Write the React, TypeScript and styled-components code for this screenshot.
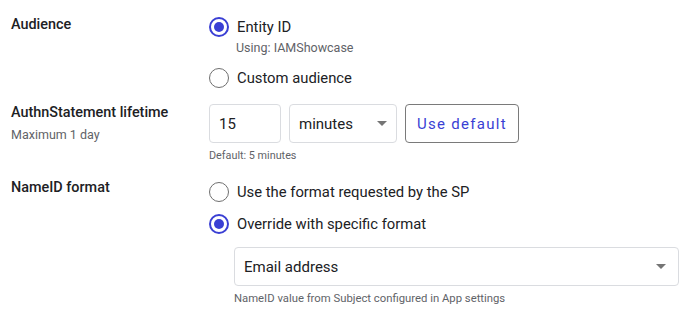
import React, {FC} from 'react';
import styled, {createGlobalStyle} from "styled-components";

const blue = "#3a3fd4"

const GlobalStyle = createGlobalStyle`
    body {
        margin: 0;
        background: #ffffff;
        font-family: Roboto, "Noto Sans", Arial, sans-serif;
        color: #202124;
    }
`

interface IRadio {
    checked?: boolean,
    label: string,
}

const Radio: FC<IRadio> = ({checked, label}) => (
    <RadioRow>
        <RadioCircle $checked={checked}/>
        <RadioText>{label}</RadioText>
    </RadioRow>
)

const Caret = () => (
    <svg width="10" height="5" viewBox="0 0 10 5">
        <path d="M0 0 L10 0 L5 5 Z" fill="#757575"/>
    </svg>
)

const App: FC = () => {
    return (
        <Page>
            <GlobalStyle/>

            <Section $gapAfter={7}>
                <LabelCol $top={2}>
                    <Title>Audience</Title>
                </LabelCol>
                <Controls>
                    <Radio checked label="Entity ID"/>
                    <Hint $size={12.5} $top={-5} $bottom={10} $indent>Using: IAMShowcase</Hint>
                    <Radio label="Custom audience"/>
                </Controls>
            </Section>

            <Section $gapAfter={14}>
                <LabelCol $top={0}>
                    <Title>AuthnStatement lifetime</Title>
                    <SubTitle>Maximum 1 day</SubTitle>
                </LabelCol>
                <Controls>
                    <FieldRow>
                        <Box $width={72}>15</Box>
                        <Box $width={108}>
                            minutes
                            <Caret/>
                        </Box>
                        <OutlineButton>Use default</OutlineButton>
                    </FieldRow>
                    <Hint $size={10.8} $top={6} $bottom={0}>Default: 5 minutes</Hint>
                </Controls>
            </Section>

            <Section $gapAfter={0}>
                <LabelCol $top={2}>
                    <Title>NameID format</Title>
                </LabelCol>
                <Controls $top={2}>
                    <Radio label="Use the format requested by the SP"/>
                    <Radio checked label="Override with specific format"/>
                    <Nested>
                        <Box>
                            Email address
                            <Caret/>
                        </Box>
                        <Hint $size={11.3} $top={6} $bottom={0}>
                            NameID value from Subject configured in App settings
                        </Hint>
                    </Nested>
                </Controls>
            </Section>
        </Page>
    );
};

export default App;

const Page = styled.div`
    width: 693px;
    height: 316px;
    box-sizing: border-box;
    padding: 14px 14px 0 11px;
    overflow: hidden;
`

const Section = styled.div<{ $gapAfter: number }>`
    display: grid;
    grid-template-columns: 198px 1fr;
    margin-bottom: ${p => p.$gapAfter}px;
`

const LabelCol = styled.div<{ $top: number }>`
    display: flex;
    flex-direction: column;
    padding-top: ${p => p.$top}px;
`

const Title = styled.div`
    font-size: 14.4px;
    font-weight: 500;
    line-height: 18px;
    color: #202124;
`

const SubTitle = styled.div`
    font-size: 12.5px;
    line-height: 22px;
    margin-top: 2px;
    color: #5f6368;
`

const Controls = styled.div<{ $top?: number }>`
    display: flex;
    flex-direction: column;
    padding-top: ${p => p.$top || 0}px;
`

const RadioRow = styled.label`
    display: flex;
    align-items: center;
    gap: 8px;
    height: 26px;
    margin-bottom: 6px;
`

const RadioCircle = styled.span<{ $checked?: boolean }>`
    width: 20px;
    height: 20px;
    box-sizing: border-box;
    border-radius: 50%;
    border: ${p => p.$checked ? `2px solid ${blue}` : "1.5px solid #6f6f6f"};
    display: flex;
    align-items: center;
    justify-content: center;

    &:after {
        content: "";
        display: ${p => p.$checked ? "block" : "none"};
        width: 10px;
        height: 10px;
        border-radius: 50%;
        background: ${blue};
    }
`

const RadioText = styled.span`
    font-size: 14.8px;
    color: #202124;
`

const Hint = styled.div<{ $size: number, $top: number, $bottom: number, $indent?: boolean }>`
    font-size: ${p => p.$size}px;
    line-height: 14px;
    color: #5f6368;
    margin: ${p => p.$top}px 0 ${p => p.$bottom}px ${p => p.$indent ? "27px" : "0"};
`

const FieldRow = styled.div`
    display: flex;
    gap: 8px;
`

const Box = styled.div<{ $width?: number }>`
    width: ${p => p.$width ? `${p.$width}px` : "auto"};
    flex: none;
    height: 39px;
    box-sizing: border-box;
    border: 1px solid #dadce0;
    border-radius: 4px;
    padding: 0 9px 0 9px;
    display: flex;
    align-items: center;
    justify-content: space-between;
    font-size: 15px;
    color: #202124;
`

const OutlineButton = styled.button`
    height: 39px;
    width: 114px;
    box-sizing: border-box;
    border: 1px solid #7a7a7a;
    border-radius: 4px;
    background: #ffffff;
    color: ${blue};
    font-family: Roboto, sans-serif;
    font-size: 15px;
    font-weight: 400;
    letter-spacing: 1.3px;
    padding: 0;
`

const Nested = styled.div`
    display: flex;
    flex-direction: column;
    padding-left: 25px;
    margin-top: 4px;

    & > ${Box} {
        padding-right: 12px;
    }
`
